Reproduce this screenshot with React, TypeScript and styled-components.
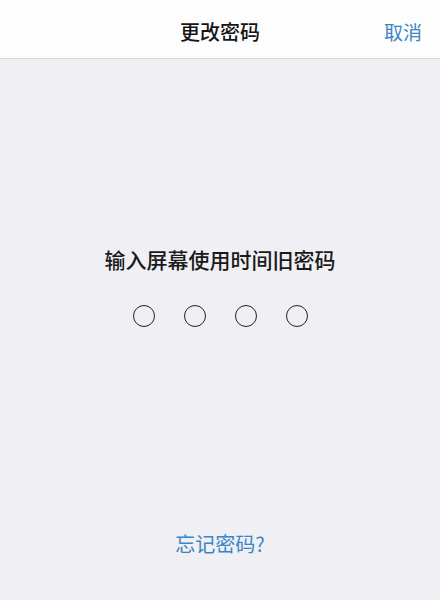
import styled, { createGlobalStyle } from 'styled-components';

const Global = createGlobalStyle`
  html, body {
    margin: 0;
    padding: 0;
    background: #efeff4;
  }
  * { box-sizing: border-box; }
`;

const Screen = styled.div`
  width: 440px;
  height: 600px;
  display: flex;
  flex-direction: column;
  background: #efeff4;
  font-family: "Noto Sans CJK SC", "Noto Sans", sans-serif;
`;

const NavBar = styled.div`
  height: 59px;
  background: #fdfdfd;
  border-bottom: 1px solid #d9d9dc;
  display: grid;
  grid-template-columns: 1fr auto 1fr;
  align-items: center;
  padding: 4px 18px 0;
`;

const Title = styled.div`
  grid-column: 2;
  font-size: 20px;
  color: #151515;
  font-weight: 500;
`;

const NavButton = styled.button`
  justify-self: end;
  border: none;
  background: none;
  padding: 0;
  font: inherit;
  font-size: 19px;
  color: #3a86c4;
`;

const Body = styled.div`
  flex: 1;
  display: flex;
  flex-direction: column;
  align-items: center;
  padding-top: 186px;
`;

const Prompt = styled.div`
  font-size: 21px;
  font-weight: 500;
  color: #1a1a1a;
  line-height: 28px;
`;

const Dots = styled.div`
  display: flex;
  gap: 29px;
  margin-top: 32px;
`;

const Dot = styled.span<{ filled?: boolean }>`
  width: 22px;
  height: 22px;
  border-radius: 50%;
  border: 1.8px solid #222;
  background: ${(p) => (p.filled ? '#222' : 'transparent')};
`;

const Spacer = styled.div`
  flex: 1;
`;

const Forgot = styled.button`
  border: none;
  background: none;
  padding: 0;
  font: inherit;
  font-size: 20px;
  color: #3a86c4;
  margin-bottom: 42px;
`;

export default function App() {
  const entered = 0;
  return (
    <Screen>
      <Global />
      <NavBar>
        <Title>更改密码</Title>
        <NavButton>取消</NavButton>
      </NavBar>
      <Body>
        <Prompt>输入屏幕使用时间旧密码</Prompt>
        <Dots>
          {[0, 1, 2, 3].map((i) => (
            <Dot key={i} filled={i < entered} />
          ))}
        </Dots>
        <Spacer />
        <Forgot>忘记密码?</Forgot>
      </Body>
    </Screen>
  );
}
